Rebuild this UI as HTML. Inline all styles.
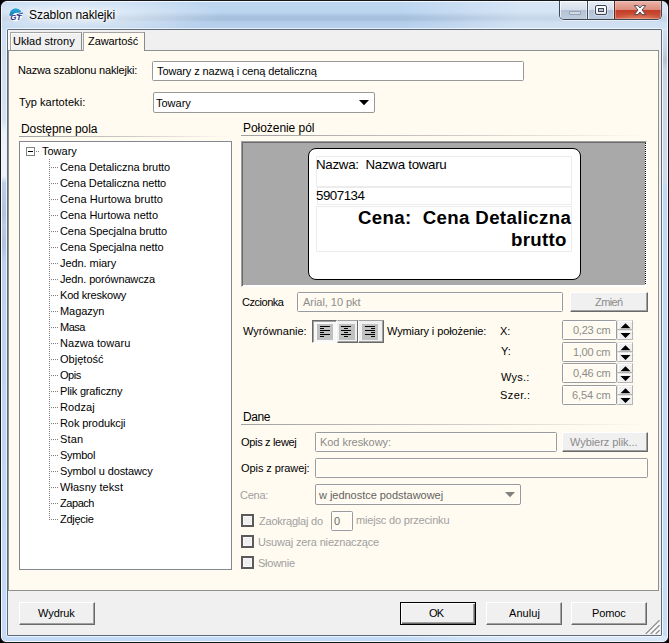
<!DOCTYPE html>
<html lang="pl">
<head>
<meta charset="utf-8">
<title>Szablon naklejki</title>
<style>
html,body{margin:0;padding:0;}
body{width:669px;height:643px;overflow:hidden;background:#000;font-family:"Liberation Sans",sans-serif;font-size:11px;color:#000;position:relative;}
*{box-sizing:border-box;}
.abs{position:absolute;}
.t{position:absolute;white-space:nowrap;line-height:13px;height:13px;z-index:3;}
.title{text-shadow:0 0 6px #fff,0 0 6px #fff,0 0 3px #fff;}
#win{position:absolute;left:0;top:0;width:669px;height:643px;background:#14171c;border-radius:7px 7px 6px 6px;overflow:hidden;}
#frame{position:absolute;left:1px;top:1px;width:667px;height:641px;border-radius:6px 6px 5px 5px;border:1px solid #f4f8fd;
 background:
  radial-gradient(ellipse 150px 22px at 70px 13px,rgba(255,255,255,.75),rgba(255,255,255,0) 100%),
  linear-gradient(to right,rgba(255,255,255,0) 400px,rgba(255,255,255,.38) 520px,rgba(255,255,255,.36) 665px),
  linear-gradient(to bottom,#bfd7f1 0px,#bcd5ef 10px,#a6c0dd 15px,#a6c0dd 18px,#b3cdea 20px,#b8d2ee 26px,#cfdff3 28px,#c3dbf6 639px);}
#clienthl{position:absolute;left:6px;top:28px;width:657px;height:609px;border:1px solid rgba(255,255,255,.62);border-radius:2px;}
#client{position:absolute;left:8px;top:30px;width:653px;height:605px;background:#f0f0f0;}
#clientborder{position:absolute;left:7px;top:29px;width:655px;height:607px;border:1px solid #5f6b78;border-radius:1px;z-index:5;pointer-events:none;}
#page{position:absolute;left:8px;top:50px;width:651px;height:541px;background:#fffbf0;border:1px solid #8e8f8f;}
.tab{position:absolute;top:32px;height:18px;border:1px solid;border-color:#a3a3a3 #8a8a8a #8a8a8a #a3a3a3;border-bottom:none;background:#f0f0f0;box-shadow:inset 1px 1px 0 #fbfbfb;}
.tab.sel{background:#fffbf0;height:19px;box-shadow:none;}
.inp{position:absolute;background:#fff;border:1px solid #989898;border-radius:1.5px;}
.inp.dis{background:#fffbf0;border-color:#9a9a9a;box-shadow:inset 0 0 0 1px #fff;}
.btn{position:absolute;background:#f0f0f0;border:1px solid;border-color:#fff #696969 #696969 #fff;box-shadow:inset -1px -1px 0 #a0a0a0;}
.hr{position:absolute;height:1px;background:linear-gradient(to right,#a0a0a0,rgba(160,160,160,.55) 50%,rgba(160,160,160,0));}
.dots{position:absolute;height:1px;width:8px;left:51px;background-image:linear-gradient(to right,#808080 50%,transparent 50%);background-size:2px 1px;}
.cb{position:absolute;width:13px;height:13px;border:2px solid #5a5a5a;background:#efefef;box-shadow:inset 0 0 0 1px #f8f8f8;}
.sp{position:absolute;width:16px;height:10px;background:#f0f0f0;border:1px solid;border-color:#e3e3e3 #b4b4b4 #b4b4b4 #e3e3e3;box-shadow:inset 1px 1px 0 #fff;}
</style>
</head>
<body>
<div id="win">
 <div id="frame"></div>
 <div class="abs" style="left:2px;top:30px;width:4px;height:606px;background:linear-gradient(to bottom,#cfdff3 0,#d3e1f3 90px,#ecf1f8 102px,#eef3fa 146px,#bbcfea 153px,#b0c4e0 185px,#b8cce8 195px,#afc3df 215px,#bcd2ee 232px,#c3dbf6 606px);"></div>
 <div class="abs" style="left:663px;top:30px;width:4px;height:606px;background:linear-gradient(to bottom,#cfe0f5 0,#c3d1e3 22px,#b4c2d4 30px,#c9d6e6 40px,#cfdbea 150px,#c0d8f5 158px,#c5ddf8 606px);"></div>
 <div id="clienthl"></div>
 <!-- title icon -->
 <svg class="abs" style="left:7px;top:6px" width="18" height="18" viewBox="7 6 18 18">
  <defs><linearGradient id="ig" x1="0" y1="0" x2="0" y2="1"><stop offset="0" stop-color="#2cb8dc"/><stop offset="1" stop-color="#1877bd"/></linearGradient>
  <clipPath id="ic"><circle cx="15.7" cy="14.6" r="6.3"/></clipPath></defs>
  <circle cx="15.7" cy="14.6" r="7" fill="#f3f1f2" opacity=".85"/>
  <circle cx="15.7" cy="14.6" r="6.3" fill="#fff"/>
  <path d="M8 6 L24 6 L24 11.6 L20.8 12.6 L15 13 L10.6 16.2 L8 16.6 Z" fill="url(#ig)" clip-path="url(#ic)"/>
  <text x="10.3" y="19.9" font-family="Liberation Sans, sans-serif" font-size="7" font-weight="bold" font-style="italic" fill="#1c2a80" textLength="11" lengthAdjust="spacingAndGlyphs">GT</text><path d="M16.5 14.8 L23 13" stroke="#1c2a80" stroke-width="0.9"/>
 </svg>
 <!-- caption buttons -->
 <div class="abs" id="capbtns" style="left:559px;top:1px;width:103px;height:19px;border:1px solid #3f4753;border-top:none;border-radius:0 0 5px 5px;overflow:hidden;background:#cbd9ea;box-shadow:0 1px 0 rgba(255,255,255,.55);">
  <div class="abs" style="left:0;top:0;width:28px;height:18px;background:linear-gradient(#e9eef5 0,#d6deea 49%,#b2c1d5 50%,#becdde 100%);border-right:1px solid #3f4753;box-shadow:inset 1px 0 0 rgba(255,255,255,.7),inset -1px 0 0 rgba(255,255,255,.5),inset 0 1px 0 rgba(255,255,255,.8);"></div>
  <div class="abs" style="left:28px;top:0;width:27px;height:18px;background:linear-gradient(#e9eef5 0,#d6deea 49%,#b2c1d5 50%,#becdde 100%);border-right:1px solid #5a2a22;box-shadow:inset 1px 0 0 rgba(255,255,255,.7),inset -1px 0 0 rgba(255,255,255,.5),inset 0 1px 0 rgba(255,255,255,.8);"></div>
  <div class="abs" style="left:55px;top:0;width:46px;height:18px;background:radial-gradient(ellipse 26px 7px at 23px 19px,rgba(240,150,110,.75),rgba(240,150,110,0)),linear-gradient(#ebb5aa 0,#dc8c7c 49%,#c43c26 50%,#cb5a44 100%);box-shadow:inset 0 0 0 1px rgba(255,225,215,.35);"></div>
  <div class="abs" style="left:9px;top:10px;width:12px;height:4px;background:#d3dae3;border:1px solid #96a0ae;border-radius:1px;"></div>
  <div class="abs" style="left:35px;top:4px;width:12px;height:10px;border:1px solid #3f4556;background:linear-gradient(#fff 50%,#e6e6e6);border-radius:2px;box-shadow:0 0 0 1px rgba(255,255,255,.35);"></div>
  <div class="abs" style="left:38px;top:7px;width:6px;height:4px;border:1px solid #3f4556;background:#b8c4d4;"></div>
  <svg class="abs" style="left:73px;top:3px" width="14" height="12" viewBox="0 0 14 12"><path d="M1.3 1.6 L4.9 1.6 L7 4 L9.1 1.6 L12.7 1.6 L9 6 L12.7 10.6 L9.1 10.6 L7 8 L4.9 10.6 L1.3 10.6 L5 6 Z" fill="#fff" stroke="#4e4a52" stroke-width="1" stroke-linejoin="round"/></svg>
 </div>
 <div id="client"></div>
 <div id="clientborder"></div>
 <!-- tabs -->
 <div class="abs" style="left:8px;top:30px;width:2px;height:20px;background:#fafafa;"></div>
 <div class="tab" id="tab1" style="left:10px;width:72px;"></div>
 <div id="page"></div>
 <div class="tab sel" id="tab2" style="left:83px;width:62px;"></div>

 <!-- top fields -->
 <div class="inp" style="left:152px;top:61px;width:372px;height:20px;"></div>
 <div class="inp" style="left:153px;top:92px;width:222px;height:21px;border-radius:2px;"></div>
 <svg class="abs" style="left:359px;top:100px" width="10" height="6"><path d="M0 0 L10 0 L5 5.2 Z" fill="#000"/></svg>

 <!-- left group -->
 <div class="hr" style="left:19px;top:136px;width:212px;"></div>
 <div class="inp" id="treebox" style="left:19px;top:141px;width:213px;height:429px;border-color:#828790;border-radius:0;"></div>
 <div class="abs" style="left:26px;top:147px;width:9px;height:9px;border:1px solid #808080;background:#fff;"></div>
 <div class="abs" style="left:28px;top:151px;width:5px;height:1px;background:#000;"></div>
 <div class="dots" style="left:36px;top:151px;width:4px;"></div>
 <div class="abs" style="left:49px;top:159px;width:1px;height:361px;background-image:linear-gradient(to bottom,#808080 50%,transparent 50%);background-size:1px 2px;"></div>
 <div class="dots" style="top:167px;"></div><div class="t" id="x43" style="left:60px;top:161px;letter-spacing:-0.08px;">Cena Detaliczna brutto</div>
 <div class="dots" style="top:183px;"></div><div class="t" id="x44" style="left:60px;top:177px;letter-spacing:-0.1px;">Cena Detaliczna netto</div>
 <div class="dots" style="top:199px;"></div><div class="t" id="x45" style="left:60px;top:193px;letter-spacing:0.08px;">Cena Hurtowa brutto</div>
 <div class="dots" style="top:215px;"></div><div class="t" id="x46" style="left:60px;top:209px;letter-spacing:0.01px;">Cena Hurtowa netto</div>
 <div class="dots" style="top:231px;"></div><div class="t" id="x47" style="left:60px;top:225px;letter-spacing:-0.09px;">Cena Specjalna brutto</div>
 <div class="dots" style="top:247px;"></div><div class="t" id="x48" style="left:60px;top:241px;letter-spacing:-0.08px;">Cena Specjalna netto</div>
 <div class="dots" style="top:263px;"></div><div class="t" id="x49" style="left:60px;top:257px;letter-spacing:-0.07px;">Jedn. miary</div>
 <div class="dots" style="top:279px;"></div><div class="t" id="x50" style="left:60px;top:273px;letter-spacing:-0.138px;">Jedn. porównawcza</div>
 <div class="dots" style="top:295px;"></div><div class="t" id="x51" style="left:60px;top:289px;letter-spacing:-0.21px;">Kod kreskowy</div>
 <div class="dots" style="top:311px;"></div><div class="t" id="x52" style="left:60px;top:305px;letter-spacing:-0.05px;">Magazyn</div>
 <div class="dots" style="top:327px;"></div><div class="t" id="x53" style="left:60px;top:321px;letter-spacing:-0.53px;">Masa</div>
 <div class="dots" style="top:343px;"></div><div class="t" id="x54" style="left:60px;top:337px;letter-spacing:0.05px;">Nazwa towaru</div>
 <div class="dots" style="top:359px;"></div><div class="t" id="x55" style="left:60px;top:353px;letter-spacing:0.024px;">Objętość</div>
 <div class="dots" style="top:375px;"></div><div class="t" id="x56" style="left:60px;top:369px;letter-spacing:-0.467px;">Opis</div>
 <div class="dots" style="top:391px;"></div><div class="t" id="x57" style="left:60px;top:385px;letter-spacing:-0.18px;">Plik graficzny</div>
 <div class="dots" style="top:407px;"></div><div class="t" id="x58" style="left:60px;top:401px;letter-spacing:0.08px;">Rodzaj</div>
 <div class="dots" style="top:423px;"></div><div class="t" id="x59" style="left:60px;top:417px;letter-spacing:-0.09px;">Rok produkcji</div>
 <div class="dots" style="top:439px;"></div><div class="t" id="x60" style="left:60px;top:433px;letter-spacing:0.2px;">Stan</div>
 <div class="dots" style="top:455px;"></div><div class="t" id="x61" style="left:60px;top:449px;letter-spacing:-0.26px;">Symbol</div>
 <div class="dots" style="top:471px;"></div><div class="t" id="x62" style="left:60px;top:465px;letter-spacing:-0.13px;">Symbol u dostawcy</div>
 <div class="dots" style="top:487px;"></div><div class="t" id="x63" style="left:60px;top:481px;letter-spacing:0.056px;">Własny tekst</div>
 <div class="dots" style="top:503px;"></div><div class="t" id="x64" style="left:60px;top:497px;letter-spacing:-0.44px;">Zapach</div>
 <div class="dots" style="top:519px;"></div><div class="t" id="x65" style="left:60px;top:513px;letter-spacing:-0.27px;">Zdjęcie</div>

 <!-- right group: preview -->
 <div class="hr" style="left:241px;top:135px;width:406px;"></div>
 <div class="abs" id="prev" style="left:241px;top:141px;width:406px;height:146px;background:#a9a9a9;border:1px solid;border-color:#a0a0a0 #fff #fff #a0a0a0;box-shadow:inset 1px 1px 0 #696969,inset 0 -1px 0 #fff;"></div>
 <div class="abs" style="left:645px;top:143px;width:1px;height:142px;background-color:#fff;background-image:linear-gradient(to bottom,#000 50%,transparent 50%);background-size:1px 2px;"></div>
 <div class="abs" id="label" style="left:308px;top:148px;width:273px;height:132px;background:#fff;border:1px solid #000;border-radius:8px;"></div>
 <div class="abs" style="left:316px;top:156px;width:256px;height:31px;border:1px solid #ececec;"></div>
 <div class="abs" style="left:317px;top:187px;width:255px;height:18px;border:1px solid #ececec;"></div>
 <div class="abs" style="left:316px;top:206px;width:256px;height:46px;border:1px solid #ececec;"></div>

 <!-- font row -->
 <div class="inp dis" style="left:297px;top:292px;width:266px;height:20px;"></div>
 <div class="btn" style="left:570px;top:292px;width:78px;height:20px;"></div>

 <!-- align toolbar -->
 <div class="abs" style="left:312px;top:320px;width:72px;height:23px;background:#f0f0f0;"></div>
 <div class="abs" style="left:312px;top:320px;width:25px;height:23px;background:#f8f8f8;border:1px solid;border-color:#696969 #fff #fff #696969;box-shadow:inset 1px 1px 0 #a0a0a0;"></div>
 <div class="abs" style="left:337px;top:320px;width:21px;height:23px;background:#f0f0f0;border:1px solid;border-color:#a0a0a0 #696969 #696969 #f0f0f0;box-shadow:inset 0 -1px 0 #a0a0a0;"></div>
 <div class="abs" style="left:358px;top:320px;width:26px;height:23px;background:#f0f0f0;border:1px solid;border-color:#a0a0a0 #696969 #696969 #fff;box-shadow:inset -1px -1px 0 #a0a0a0;"></div>
 <div class="abs" style="left:317px;top:324px;width:16px;height:16px;background:#c0c0c0;"></div>
 <div class="abs" style="left:339px;top:324px;width:16px;height:16px;background:#c0c0c0;"></div>
 <div class="abs" style="left:362px;top:324px;width:16px;height:16px;background:#c0c0c0;"></div>
 <svg class="abs" style="left:312px;top:320px" width="72" height="23" shape-rendering="crispEdges">
  <g fill="#000">
   <rect x="8" y="6" width="10" height="1"/><rect x="8" y="8" width="4" height="1"/><rect x="8" y="10" width="10" height="1"/><rect x="8" y="12" width="4" height="1"/><rect x="8" y="14" width="10" height="1"/><rect x="8" y="16" width="4" height="1"/>
   <rect x="29" y="6" width="10" height="1"/><rect x="32" y="8" width="4" height="1"/><rect x="29" y="10" width="10" height="1"/><rect x="32" y="12" width="4" height="1"/><rect x="29" y="14" width="10" height="1"/><rect x="32" y="16" width="4" height="1"/>
   <rect x="53" y="6" width="10" height="1"/><rect x="59" y="8" width="4" height="1"/><rect x="53" y="10" width="10" height="1"/><rect x="59" y="12" width="4" height="1"/><rect x="53" y="14" width="10" height="1"/><rect x="59" y="16" width="4" height="1"/>
  </g>
 </svg>

 <!-- spin boxes -->
 <div class="inp dis" style="left:562px;top:320px;width:55px;height:20px;"></div>
 <div class="inp dis" style="left:562px;top:342px;width:55px;height:20px;"></div>
 <div class="inp dis" style="left:562px;top:363px;width:55px;height:20px;"></div>
 <div class="inp dis" style="left:562px;top:385px;width:55px;height:20px;"></div>
 <div class="sp" style="left:617px;top:320px;"></div><div class="sp" style="left:617px;top:330px;"></div>
 <svg class="abs" style="left:620px;top:323px" width="11" height="16"><path d="M0.5 5.2 L5.5 0.2 L10.5 5.2 Z M0.5 10 L10.5 10 L5.5 15 Z" fill="#000"/></svg>
 <div class="sp" style="left:617px;top:342px;"></div><div class="sp" style="left:617px;top:352px;"></div>
 <svg class="abs" style="left:620px;top:345px" width="11" height="16"><path d="M0.5 5.2 L5.5 0.2 L10.5 5.2 Z M0.5 10 L10.5 10 L5.5 15 Z" fill="#000"/></svg>
 <div class="sp" style="left:617px;top:363px;"></div><div class="sp" style="left:617px;top:373px;"></div>
 <svg class="abs" style="left:620px;top:366px" width="11" height="16"><path d="M0.5 5.2 L5.5 0.2 L10.5 5.2 Z M0.5 10 L10.5 10 L5.5 15 Z" fill="#000"/></svg>
 <div class="sp" style="left:617px;top:385px;"></div><div class="sp" style="left:617px;top:395px;"></div>
 <svg class="abs" style="left:620px;top:388px" width="11" height="16"><path d="M0.5 5.2 L5.5 0.2 L10.5 5.2 Z M0.5 10 L10.5 10 L5.5 15 Z" fill="#000"/></svg>

 <!-- Dane -->
 <div class="hr" style="left:241px;top:424px;width:406px;"></div>
 <div class="inp dis" style="left:315px;top:432px;width:242px;height:20px;"></div>
 <div class="btn" style="left:562px;top:432px;width:86px;height:20px;"></div>
 <div class="inp" style="left:315px;top:458px;width:333px;height:20px;background:#fffbf0;border-color:#9a9a9a;box-shadow:inset 0 0 0 1px #fff;"></div>
 <div class="inp dis" style="left:315px;top:484px;width:206px;height:21px;border-radius:2px;"></div>
 <svg class="abs" style="left:505px;top:492px" width="10" height="6"><path d="M0 0 L10 0 L5 5.2 Z" fill="#808080"/></svg>

 <div class="cb" style="left:241px;top:514px;"></div>
 <div class="inp dis" style="left:331px;top:511px;width:22px;height:20px;"></div>
 <div class="cb" style="left:241px;top:535px;"></div>
 <div class="cb" style="left:241px;top:556px;"></div>

 <!-- bottom buttons -->
 <div class="btn" style="left:19px;top:602px;width:76px;height:23px;"></div>
 <div class="btn" style="left:400px;top:602px;width:76px;height:23px;border-color:#000;box-shadow:inset 1px 1px 0 #fff,inset -1px -1px 0 #696969,inset -2px -2px 0 #a0a0a0;"></div>
 <div class="btn" style="left:486px;top:602px;width:76px;height:23px;"></div>
 <div class="btn" style="left:571px;top:602px;width:76px;height:23px;"></div>
 <!-- grip -->
 <svg class="abs" style="left:645px;top:619px" width="15" height="15"><g stroke="#fff" stroke-width="1.3" fill="none"><path d="M14.5 3.2 L2.7 15 M14.5 8.2 L7.7 15 M14.5 13.2 L12.7 15"/></g><g stroke="#8e8e8e" stroke-width="1.25" fill="none"><path d="M14.5 1.2 L0.7 15 M14.5 6.2 L5.7 15 M14.5 11.2 L10.7 15"/></g></svg>

 <div class="t title" id="x0" style="left:29px;top:8px;font-size:12px;line-height:15px;height:15px;letter-spacing:-0.04px;">Szablon naklejki</div>
 <div class="t" id="x1" style="left:13px;top:35px;letter-spacing:0.05px;">Układ strony</div>
 <div class="t" id="x2" style="left:88px;top:35px;letter-spacing:-0.07px;">Zawartość</div>
 <div class="t" id="x3" style="left:18px;top:64px;letter-spacing:-0.18px;">Nazwa szablonu naklejki:</div>
 <div class="t" id="x4" style="left:157px;top:65px;letter-spacing:-0.11px;">Towary z nazwą i ceną detaliczną</div>
 <div class="t" id="x5" style="left:19px;top:96px;letter-spacing:0.06px;">Typ kartoteki:</div>
 <div class="t" id="x6" style="left:156px;top:97px;">Towary</div>
 <div class="t" id="x7" style="left:21px;top:122px;font-size:12px;line-height:15px;height:15px;letter-spacing:-0.08px;">Dostępne pola</div>
 <div class="t" id="x8" style="left:243px;top:121px;font-size:12px;line-height:15px;height:15px;letter-spacing:-0.052px;">Położenie pól</div>
 <div class="t" id="x9" style="left:42px;top:145px;">Towary</div>
 <div class="t" id="x10" style="left:316px;top:157px;font-size:13.33px;line-height:16px;height:16px;letter-spacing:-0.29px;">Nazwa:&nbsp; Nazwa towaru</div>
 <div class="t" id="x11" style="left:316px;top:188px;font-size:13.33px;line-height:16px;height:16px;letter-spacing:-0.5px;">5907134</div>
 <div class="t" id="x12" style="left:358px;top:207px;font-size:18.67px;line-height:22px;height:22px;font-weight:bold;letter-spacing:0.358px;">Cena:&nbsp; Cena Detaliczna</div>
 <div class="t" id="x13" style="left:511px;top:229px;font-size:18.67px;line-height:22px;height:22px;font-weight:bold;letter-spacing:0.28px;">brutto</div>
 <div class="t" id="x14" style="left:242px;top:296px;letter-spacing:-0.47px;">Czcionka</div>
 <div class="t" id="x15" style="left:303px;top:296px;letter-spacing:-0.04px;color:#8c8c8c;">Arial, 10 pkt</div>
 <div class="t" id="x16" style="left:595px;top:296px;letter-spacing:-0.58px;color:#8c8c8c;">Zmień</div>
 <div class="t" id="x17" style="left:243px;top:325px;letter-spacing:0.02px;">Wyrównanie:</div>
 <div class="t" id="x18" style="left:387px;top:325px;letter-spacing:-0.11px;">Wymiary i położenie:</div>
 <div class="t" id="x19" style="left:500px;top:325px;">X:</div>
 <div class="t" id="x20" style="left:501px;top:345px;">Y:</div>
 <div class="t" id="x21" style="left:501px;top:371px;letter-spacing:0.25px;">Wys.:</div>
 <div class="t" id="x22" style="left:500px;top:389px;letter-spacing:0.4px;">Szer.:</div>
 <div class="t" id="x23" style="left:573px;top:324px;letter-spacing:-0.25px;color:#8c8c8c;">0,23 cm</div>
 <div class="t" id="x24" style="left:573px;top:346px;letter-spacing:-0.28px;color:#8c8c8c;">1,00 cm</div>
 <div class="t" id="x25" style="left:573px;top:367px;letter-spacing:-0.25px;color:#8c8c8c;">0,46 cm</div>
 <div class="t" id="x26" style="left:572px;top:389px;letter-spacing:-0.08px;color:#8c8c8c;">6,54 cm</div>
 <div class="t" id="x27" style="left:243px;top:410px;font-size:12px;line-height:15px;height:15px;letter-spacing:-0.42px;">Dane</div>
 <div class="t" id="x28" style="left:241px;top:436px;letter-spacing:-0.32px;">Opis z lewej</div>
 <div class="t" id="x29" style="left:320px;top:436px;letter-spacing:-0.04px;color:#8c8c8c;">Kod kreskowy:</div>
 <div class="t" id="x30" style="left:570px;top:436px;letter-spacing:-0.06px;color:#8c8c8c;">Wybierz plik...</div>
 <div class="t" id="x31" style="left:241px;top:462px;letter-spacing:-0.08px;">Opis z prawej:</div>
 <div class="t" id="x32" style="left:240px;top:489px;letter-spacing:-0.25px;color:#a0a0a0;">Cena:</div>
 <div class="t" id="x33" style="left:319px;top:489px;letter-spacing:-0.03px;color:#626262;">w jednostce podstawowej</div>
 <div class="t" id="x34" style="left:259px;top:515px;letter-spacing:-0.212px;color:#a0a0a0;">Zaokrąglaj do</div>
 <div class="t" id="x35" style="left:334px;top:515px;color:#6a6a6a;">0</div>
 <div class="t" id="x36" style="left:356px;top:514px;letter-spacing:-0.17px;color:#a0a0a0;">miejsc do przecinku</div>
 <div class="t" id="x37" style="left:258px;top:536px;letter-spacing:-0.16px;color:#a0a0a0;">Usuwaj zera nieznaczące</div>
 <div class="t" id="x38" style="left:258px;top:557px;letter-spacing:-0.245px;color:#a0a0a0;">Słownie</div>
 <div class="t" id="x39" style="left:38px;top:607px;letter-spacing:-0.08px;">Wydruk</div>
 <div class="t" id="x40" style="left:429px;top:607px;letter-spacing:-0.8px;">OK</div>
 <div class="t" id="x41" style="left:509px;top:607px;letter-spacing:0.06px;">Anuluj</div>
 <div class="t" id="x42" style="left:592px;top:607px;letter-spacing:-0.15px;">Pomoc</div>
</div>
</body>
</html>
